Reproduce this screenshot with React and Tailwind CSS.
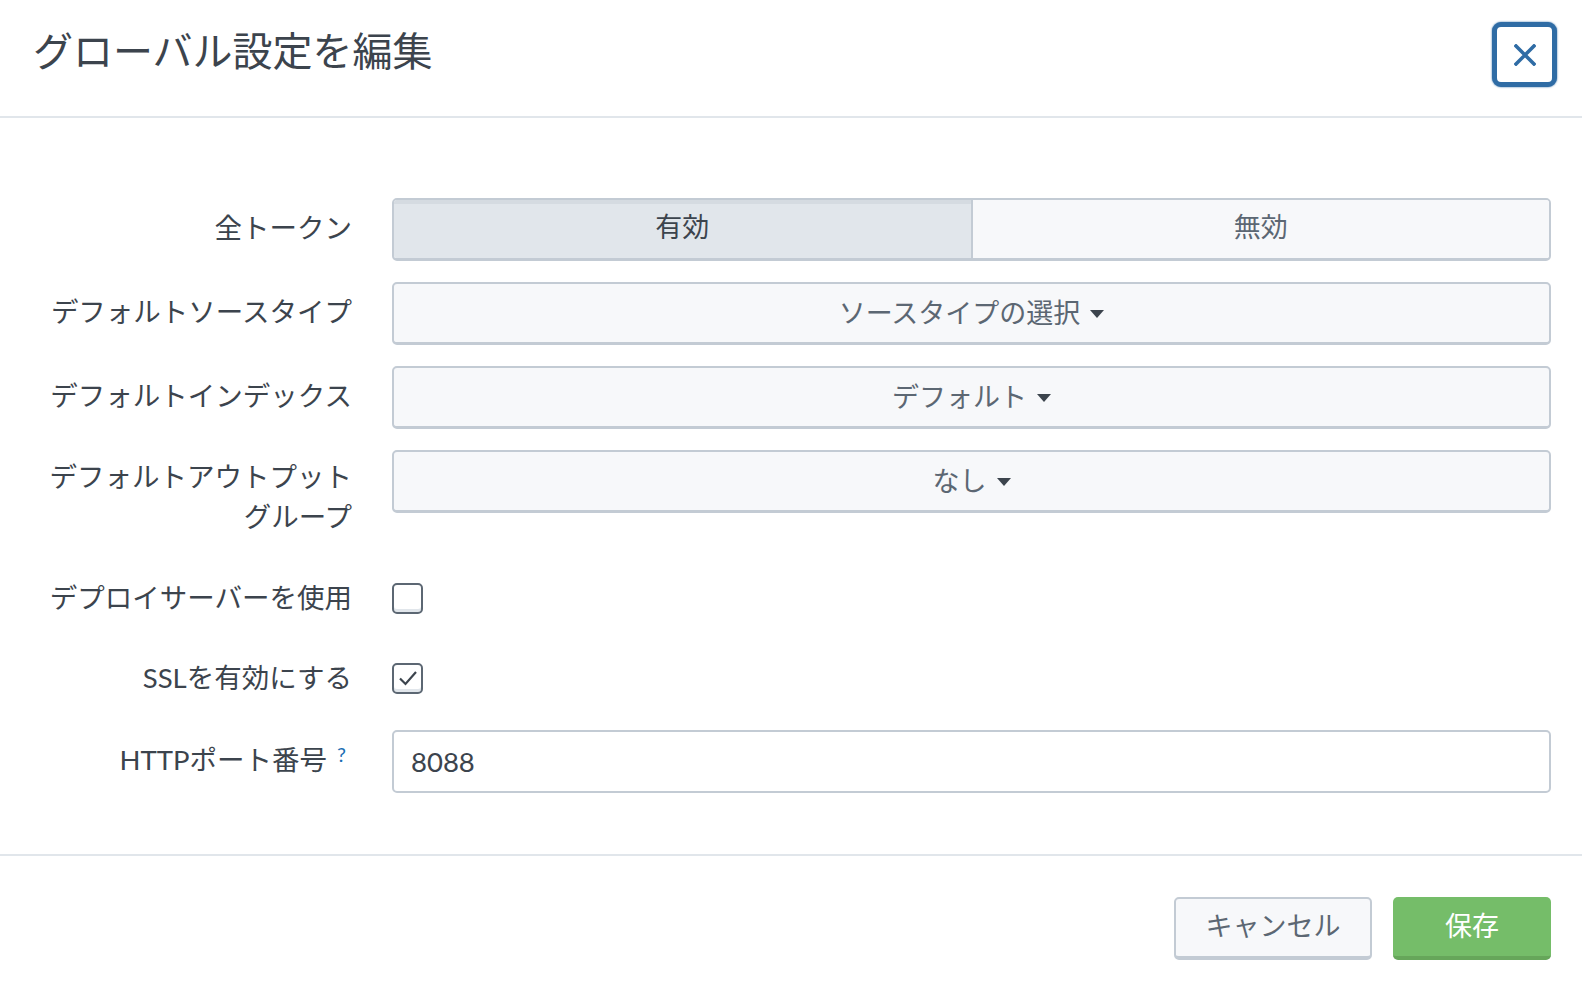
import { useState } from "react";

const font = { fontFamily: '"Lato", "Noto Sans CJK JP", sans-serif' };

//small caret shown after dropdown values
const Caret = () => (
  <svg width="14" height="9" viewBox="0 0 14 9" className="ml-[10px] mt-[3px]">
    <path d="M0 0 L14 0 L7 8 Z" fill="#3c444d" />
  </svg>
);

const Label = ({ children, className = "" }) => (
  <div className={"w-[352px] shrink-0 text-right text-[27.5px] text-[#3c444d] " + className}>
    {children}
  </div>
);

const Dropdown = ({ value }) => (
  <button className="flex-1 h-[63px] flex items-center justify-center rounded-[5px] border-2 border-[#c3cbd4] border-b-[3px] bg-[#f7f8fa] text-[27px] text-[#5c6773]">
    {value}
    <Caret />
  </button>
);

const Checkbox = ({ checked, onClick }) => (
  <button
    onClick={onClick}
    className="w-[31px] h-[31px] rounded-[5px] border-2 border-[#5c6773] bg-white flex items-center justify-center shadow-[inset_0_-3px_0_#e1e6eb]"
  >
    {checked && (
      <svg width="20" height="16" viewBox="0 0 20 16">
        <path d="M2 8.5 L7.5 14 L18 2" fill="none" stroke="#3c444d" strokeWidth="2.2" />
      </svg>
    )}
  </button>
);

export default function App() {
  const [tokens, setTokens] = useState(true);
  const [deploy, setDeploy] = useState(false);
  const [ssl, setSsl] = useState(true);

  return (
    <div className="w-[1582px] h-[998px] bg-white" style={font}>
      {/* header */}
      <div className="h-[118px] border-b-2 border-[#e1e6eb] flex items-center justify-between pl-[33px] pr-[25px]">
        <h1 className="text-[40px] text-[#3c444d] leading-none -mt-[14px]">グローバル設定を編集</h1>
        <button className="w-[65px] h-[65px] -mt-[7px] rounded-[9px] border-[5px] border-[#2f6ca5] bg-white flex items-center justify-center shadow-[0_0_2px_#2f6ca5]">
          <svg width="22" height="22" viewBox="0 0 22 22">
            <path d="M2 2 L20 20 M20 2 L2 20" stroke="#2f6ca5" strokeWidth="3.6" strokeLinecap="square" />
          </svg>
        </button>
      </div>

      {/* form */}
      <div className="pt-[80px] pb-[61px] pr-[31px] border-b-2 border-[#e1e6eb]">
        <div className="flex items-center gap-[40px] mb-[21px]">
          <Label className="-mt-[4px]">全トークン</Label>
          <div className="flex-1 h-[63px] flex rounded-[5px] border-2 border-[#c3cbd4] border-b-[3px] overflow-hidden text-[27px]">
            <button
              onClick={() => setTokens(true)}
              className={
                (tokens ? "bg-[#e1e6eb] shadow-[inset_0_4px_0_#d5dbe1] " : "bg-[#f7f8fa] ") +
                "flex-1 text-[#3c444d] border-r-2 border-[#c3cbd4] pb-[4px]"
              }
            >
              有効
            </button>
            <button
              onClick={() => setTokens(false)}
              className={(!tokens ? "bg-[#e1e6eb] " : "bg-[#f7f8fa] ") + "flex-1 text-[#5c6773] pb-[4px]"}
            >
              無効
            </button>
          </div>
        </div>

        <div className="flex items-center gap-[40px] mb-[21px]">
          <Label className="-mt-[4px]">デフォルトソースタイプ</Label>
          <Dropdown value="ソースタイプの選択" />
        </div>

        <div className="flex items-center gap-[40px] mb-[21px]">
          <Label className="-mt-[4px]">デフォルトインデックス</Label>
          <Dropdown value="デフォルト" />
        </div>

        <div className="flex items-start gap-[40px]">
          <Label className="leading-[40px] pt-[7px]">
            デフォルトアウトプット
            <br />
            グループ
          </Label>
          <Dropdown value="なし" />
        </div>

        <div className="flex items-center gap-[40px] h-[40px] mt-[41px]">
          <Label>デプロイサーバーを使用</Label>
          <Checkbox checked={deploy} onClick={() => setDeploy(!deploy)} />
        </div>

        <div className="flex items-center gap-[40px] h-[40px] mt-[40px]">
          <Label>SSLを有効にする</Label>
          <Checkbox checked={ssl} onClick={() => setSsl(!ssl)} />
        </div>

        <div className="flex items-center gap-[40px] mt-[32px]">
          <Label className="pr-[6px] -mt-[4px]">
            HTTPポート番号
            <sup className="ml-[10px] text-[20px] text-[#1a6db3] relative -top-[8px]">?</sup>
          </Label>
          <input
            defaultValue="8088"
            className="flex-1 h-[63px] rounded-[5px] border-2 border-[#c3cbd4] bg-white px-[17px] text-[27.5px] text-[#3c444d] outline-none"
          />
        </div>
      </div>

      {/* footer */}
      <div className="flex justify-end gap-[21px] pt-[41px] pr-[31px]">
        <button className="w-[198px] h-[63px] rounded-[5px] border-2 border-[#c3cbd4] border-b-[4px] bg-[#f7f8fa] text-[27px] text-[#5c6773] pb-[2px]">
          キャンセル
        </button>
        <button className="w-[158px] h-[63px] rounded-[5px] border-b-[4px] border-[#66a65a] bg-[#75bd69] text-[27px] text-white">
          保存
        </button>
      </div>
    </div>
  );
}
